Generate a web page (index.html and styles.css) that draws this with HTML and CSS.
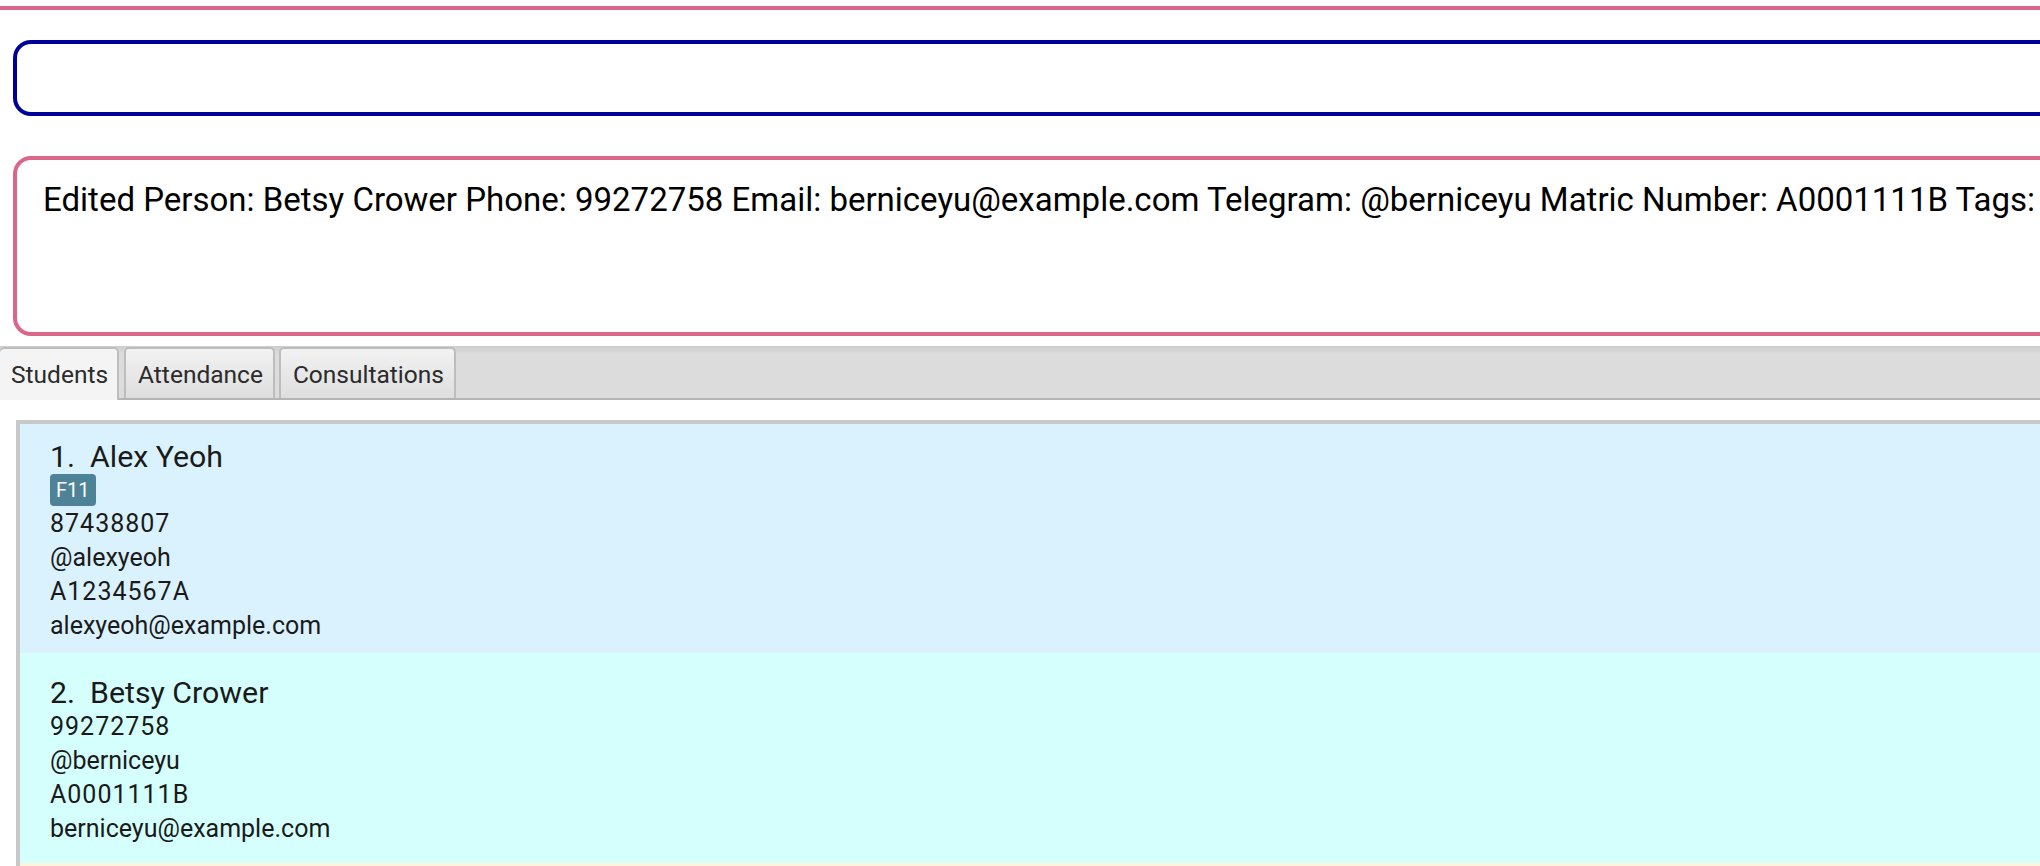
FILE: index.html
```html
<!DOCTYPE html>
<html>
<head>
<meta charset="utf-8">
<link rel="stylesheet" href="styles.css">
</head>
<body>
<div class="app">
  <div class="topline"></div>
  <div class="command-box"></div>
  <div class="result-box"><span class="result-text">Edited Person: Betsy Crower Phone: 99272758 Email: berniceyu@example.com Telegram: @berniceyu Matric Number: A0001111B Tags: </span></div>
  <div class="tabbar">
    <div class="tab active">Students</div>
    <div class="tab">Attendance</div>
    <div class="tab">Consultations</div>
  </div>
  <div class="list">
    <div class="card card-first">
      <div class="name"><span class="idx">1.</span>Alex Yeoh</div>
      <div class="tags"><span class="tag">F11</span></div>
      <div class="line num">87438807</div>
      <div class="line">@alexyeoh</div>
      <div class="line num">A1234567A</div>
      <div class="line">alexyeoh@example.com</div>
    </div>
    <div class="card card-second">
      <div class="name"><span class="idx">2.</span>Betsy Crower</div>
      <div class="line num">99272758</div>
      <div class="line">@berniceyu</div>
      <div class="line num">A0001111B</div>
      <div class="line">berniceyu@example.com</div>
    </div>
    <div class="card card-third"></div>
  </div>
</div>
</body>
</html>
```
FILE: styles.css
```css
* { box-sizing: border-box; }
html, body { margin: 0; padding: 0; background: #ffffff; }
body { font-family: Roboto, "Liberation Sans", sans-serif; color: #1c1c1c; overflow: hidden; }
.app { width: 2040px; height: 866px; overflow: hidden; }
.topline { margin-top: 6px; height: 4px; background: #dc6689; }
.command-box {
  margin: 30px -40px 0 13px;
  height: 76px;
  border: 4px solid #000099;
  border-radius: 18px;
}
.result-box {
  margin: 40px -40px 0 13px;
  height: 180px;
  border: 4px solid #dc6689;
  border-radius: 18px;
  padding: 20px 0 0 26px;
  white-space: nowrap;
}
.result-text { font-size: 33px; line-height: 40px; color: #000; }
.tabbar {
  margin-top: 10px;
  height: 54px;
  background: linear-gradient(#cdcdcd 0, #dcdcdc 8px, #dcdcdc 100%);
  border-bottom: 2px solid #b4b4b4;
  display: flex;
  align-items: flex-end;
  gap: 4px;
}
.tab {
  height: 51px;
  padding: 1px 10px 0 12px;
  border: 2px solid #bdbdbd;
  border-bottom: none;
  border-radius: 5px 5px 0 0;
  background: linear-gradient(#f2f2f2, #dedede);
  font-size: 24.5px;
  color: #2b2b2b;
  display: flex;
  align-items: center;
}
.tab.active {
  height: 53px;
  margin-bottom: -2px;
  margin-right: 1px;
  background: #f4f4f4;
  border-left: none;
  padding: 0 9px 1px 11px;
}
.list {
  margin: 20px 0 0 16px;
  border-top: 4px solid #c8c8c8;
  border-left: 4px solid #c8c8c8;
}
.card { padding: 22px 0 17px 30px; }
.card-first { background: #daf2fe; padding-top: 15px; padding-bottom: 10px; }
.card-second { background: #d4fffd; }
.card-third { background: #fdf4dd; height: 40px; padding: 0; }
.name { font-size: 30.3px; line-height: 35px; color: #1a1a1a; }
.idx { margin-right: 15px; }
.tags { height: 33px; }
.tag {
  display: inline-block;
  height: 32px;
  line-height: 32px;
  padding: 0 6px;
  background: #4e8397;
  color: #ffffff;
  border-radius: 4px;
  font-size: 20px;
}
.line { font-size: 25px; line-height: 34px; color: #1a1a1a; }
.line.num { letter-spacing: 1px; }
```
